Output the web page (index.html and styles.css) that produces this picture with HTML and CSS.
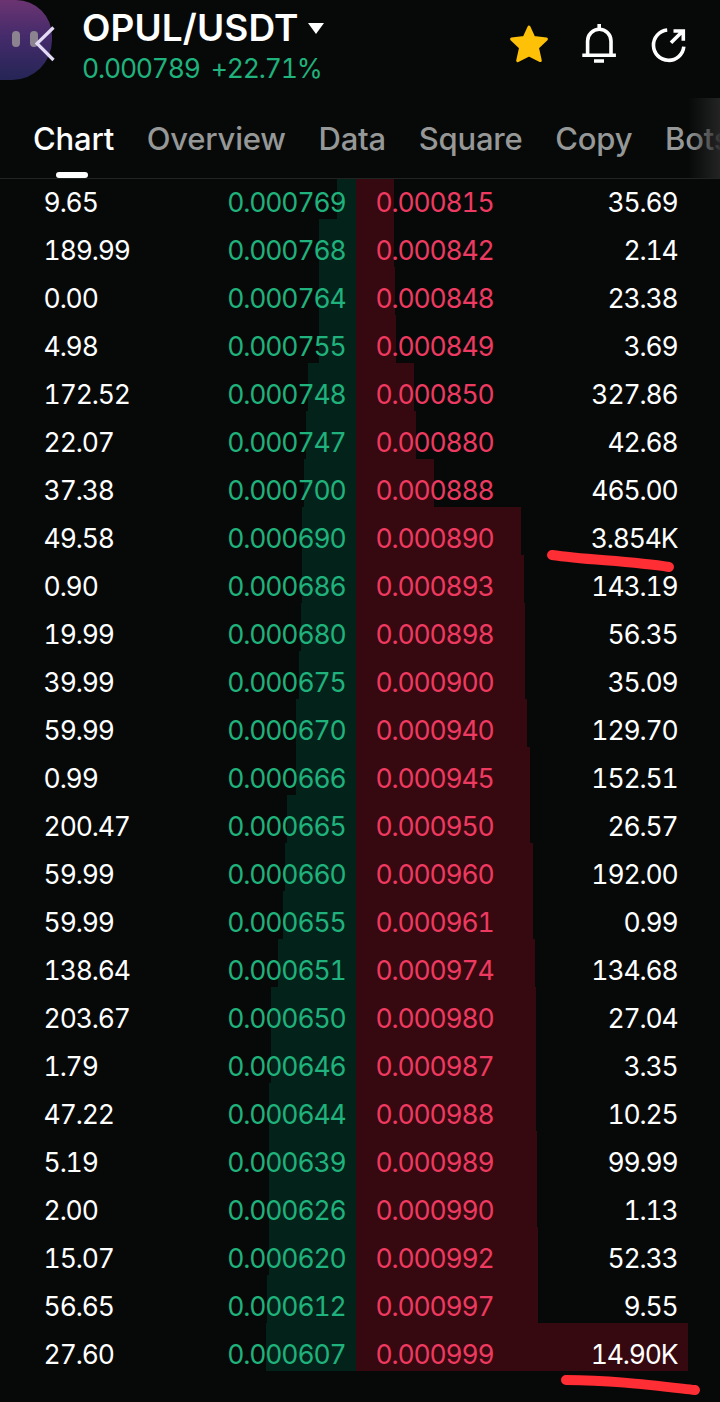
FILE: index.html
```html
<!DOCTYPE html>
<html lang="en">
<head>
    <meta charset="UTF-8">
    <meta name="viewport" content="width=device-width, initial-scale=1.0">
    <title>OPUL/USDT</title>
    <link rel="stylesheet" href="styles.css">
</head>
<body>
    <header class="header">
        <div class="avatar">
            <span class="eye"></span>
            <span class="eye"></span>
        </div>
        <svg class="back" viewBox="0 0 20 36"><path d="M18.5 1.5 2 17.5l16.5 16.5" fill="none" stroke="currentColor" stroke-width="3.2"/></svg>
        <div class="pair">
            <h1>OPUL/USDT <i class="caret"></i></h1>
            <div class="price"><span>0.000789</span><span>+22.71%</span></div>
        </div>
        <div class="actions">
            <svg viewBox="0 0 40 40" fill="#ffc107" stroke="#ffc107" stroke-width="3" stroke-linejoin="round"><path d="M20 4l4.8 10.6 12.6 1.5-9 8.6 2.9 12.9L20 31.8 8.7 37.6l2.9-12.9-9-8.6 12.6-1.5z"/></svg>
            <svg viewBox="0 0 40 40" fill="none" stroke="#fff" stroke-width="3.6"><path d="M20.2 1v5M8.6 32V18a11.7 11.7 0 0 1 23.4 0V32M3.3 32.2h33.6M15 38h10"/></svg>
            <svg viewBox="0 0 40 40" fill="none" stroke="#fff" stroke-width="3.6"><path d="M18.2 7A15.2 15.2 0 1 0 34.8 23.6M22 19.8 33.6 8.2M24.5 8h9.8v9.8"/></svg>
        </div>
    </header>

    <nav class="tabs">
        <a class="active">Chart</a>
        <a>Overview</a>
        <a>Data</a>
        <a>Square</a>
        <a>Copy</a>
        <a>Bots</a>
    </nav>

    <main class="book" id="book"></main>

    <svg class="mark mark-first" viewBox="0 0 130 26"><path d="M6 7C40 12 85 13 123 19" /></svg>
    <svg class="mark mark-last" viewBox="0 0 142 26"><path d="M6 7C50 7 90 12 135 17" /></svg>

    <script>
        // amount, bid, bid depth, ask, amount, ask depth
        const rows = [
            ['9.65', '0.000769', 19, '0.000815', '35.69', 38],
            ['189.99', '0.000768', 37, '0.000842', '2.14', 38],
            ['0.00', '0.000764', 37, '0.000848', '23.38', 39],
            ['4.98', '0.000755', 37, '0.000849', '3.69', 40],
            ['172.52', '0.000748', 48, '0.000850', '327.86', 58],
            ['22.07', '0.000747', 50, '0.000880', '42.68', 60],
            ['37.38', '0.000700', 52, '0.000888', '465.00', 78],
            ['49.58', '0.000690', 54, '0.000890', '3.854K', 165],
            ['0.90', '0.000686', 54, '0.000893', '143.19', 168],
            ['19.99', '0.000680', 55, '0.000898', '56.35', 169],
            ['39.99', '0.000675', 57, '0.000900', '35.09', 169],
            ['59.99', '0.000670', 60, '0.000940', '129.70', 171],
            ['0.99', '0.000666', 60, '0.000945', '152.51', 174],
            ['200.47', '0.000665', 69, '0.000950', '26.57', 174],
            ['59.99', '0.000660', 71, '0.000960', '192.00', 177],
            ['59.99', '0.000655', 73, '0.000961', '0.99', 177],
            ['138.64', '0.000651', 78, '0.000974', '134.68', 179],
            ['203.67', '0.000650', 85, '0.000980', '27.04', 180],
            ['1.79', '0.000646', 85, '0.000987', '3.35', 180],
            ['47.22', '0.000644', 87, '0.000988', '10.25', 180],
            ['5.19', '0.000639', 87, '0.000989', '99.99', 181],
            ['2.00', '0.000626', 87, '0.000990', '1.13', 181],
            ['15.07', '0.000620', 87, '0.000992', '52.33', 182],
            ['56.65', '0.000612', 89, '0.000997', '9.55', 182],
            ['27.60', '0.000607', 90, '0.000999', '14.90K', 332]
        ];

        document.getElementById('book').innerHTML = rows.map(r => `
            <div class="row">
                <div class="bid" style="--depth: ${r[2]}px"><span>${r[0]}</span><span class="bid-price">${r[1]}</span></div>
                <div class="ask" style="--depth: ${r[5]}px"><span class="ask-price">${r[3]}</span><span>${r[4]}</span></div>
            </div>`).join('');
    </script>
</body>
</html>
```

FILE: styles.css
```css
:root {
    --bg: #060908;
    --green: #20b27c;
    --red: #ee3a60;
    --muted: #969898;
}

* {
    box-sizing: border-box;
}

body {
    margin: 0;
    height: 1402px;
    position: relative;
    overflow: hidden;
    background: var(--bg);
    color: #fff;
    font-family: Inter, "Liberation Sans", sans-serif;
    font-feature-settings: "tnum";
}

.header {
    height: 98px;
    display: flex;
    align-items: flex-start;
}

.avatar {
    width: 52px;
    height: 80px;
    flex: none;
    display: flex;
    gap: 10px;
    padding: 31px 0 0 12px;
    border-radius: 0 36px 40px 0;
    background: linear-gradient(#6b3471, #452b6b 45%, #252556);
}

.eye {
    width: 8px;
    height: 16px;
    border-radius: 4px;
    background: #8b8490;
}

.back {
    width: 20px;
    height: 36px;
    margin: 26px 0 0 -17px;
    flex: none;
    color: #e3dbf5;
}

.pair {
    margin-left: 27px;
    flex: 1;
}

h1 {
    margin: 9px 0 0;
    display: flex;
    align-items: center;
    gap: 9px;
    font-size: 37px;
    line-height: 38px;
    font-weight: 600;
    letter-spacing: 0.1px;
    height: 38px;
    white-space: nowrap;
}

.caret {
    border: 8px solid transparent;
    border-top: 11px solid #fff;
    border-bottom: 0;
}

.price {
    display: flex;
    gap: 11px;
    margin-top: 5px;
    font-size: 26.5px;
    line-height: 32px;
    letter-spacing: -1.2px;
    color: var(--green);
}

.actions {
    display: flex;
    gap: 30px;
    padding: 23px 31px 0 0;
}

.actions svg {
    width: 40px;
    height: 40px;
}

.tabs {
    position: relative;
    height: 81px;
    display: flex;
    gap: 32.7px;
    padding-left: 33px;
    overflow: hidden;
    border-bottom: 1px solid #202423;
    font-size: 31px;
    line-height: 82px;
    font-weight: 500;
    letter-spacing: -0.2px;
    color: var(--muted);
    white-space: nowrap;
}

/* fade over the clipped last tab */
.tabs::after {
    content: '';
    position: absolute;
    right: 0;
    top: 0;
    width: 32px;
    height: 80px;
    background: linear-gradient(to right, transparent, rgba(38, 38, 38, 0.9));
}

.active {
    position: relative;
    color: #fff;
}

.active::after {
    content: '';
    position: absolute;
    left: 23px;
    bottom: 0;
    width: 32px;
    height: 6px;
    border-radius: 3px;
    background: #fff;
}

/* the list is scrolled, so the first row is cut by the tab bar */
.book {
    height: 1192px;
    display: flex;
    flex-direction: column;
    justify-content: flex-end;
    overflow: hidden;
}

.row {
    flex: none;
    height: 48px;
    display: flex;
    font-size: 26.5px;
    line-height: 62px;
    letter-spacing: -1.15px;
}

.bid,
.ask {
    display: flex;
    justify-content: space-between;
    background-repeat: no-repeat;
    background-size: var(--depth) 100%;
}

.bid {
    width: 356px;
    padding: 0 10.5px 0 43.6px;
    background-image: linear-gradient(#02221a, #02221a);
    background-position: right;
}

.ask {
    flex: 1;
    padding: 0 42.5px 0 19.4px;
    background-image: linear-gradient(#36080f, #36080f);
    background-position: left;
}

.bid-price {
    color: var(--green);
}

.ask-price {
    color: var(--red);
}

/* hand drawn underlines */
.mark {
    position: absolute;
    fill: none;
    stroke: #ff2d34;
    stroke-width: 10;
    stroke-linecap: round;
}

.mark-first {
    left: 546px;
    top: 548px;
    width: 130px;
    height: 26px;
}

.mark-last {
    left: 560px;
    top: 1373px;
    width: 142px;
    height: 26px;
}
```
